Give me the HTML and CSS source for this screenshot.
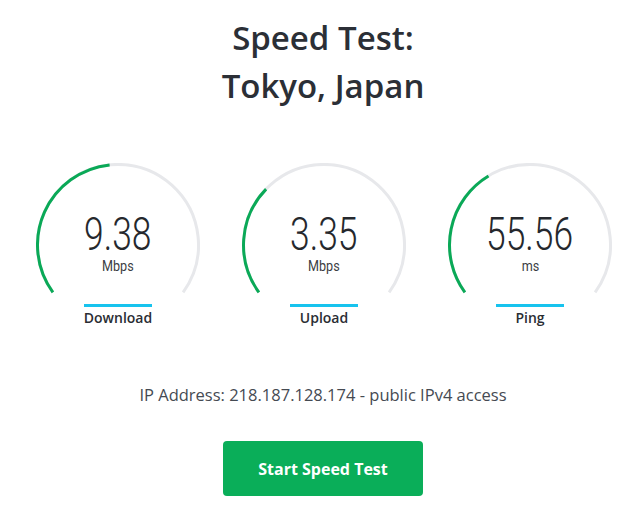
FILE: index.html
```html
<!DOCTYPE html>
<html lang="en">
<head>
<meta charset="utf-8">
<title>Speed Test: Tokyo, Japan</title>
<link rel="stylesheet" href="styles.css">
</head>
<body>
<main class="page">
  <h1 class="title">Speed Test:<br>Tokyo, Japan</h1>

  <section class="gauges">
    <div class="gauge">
      <svg class="dial" viewBox="0 0 164 164" width="164" height="164">
        <path class="track" d="M 16.9 129.3 A 80.5 80.5 0 1 1 147.1 129.3"/>
        <path class="fill" d="M 16.9 129.3 A 80.5 80.5 0 0 1 73.6 1.9"/>
      </svg>
      <div class="readout">
        <span class="value"><span class="squeeze">9.38</span></span>
        <span class="unit"><span class="squeeze">Mbps</span></span>
        <span class="bar"></span>
        <span class="label">Download</span>
      </div>
    </div>

    <div class="gauge">
      <svg class="dial" viewBox="0 0 164 164" width="164" height="164">
        <path class="track" d="M 16.9 129.3 A 80.5 80.5 0 1 1 147.1 129.3"/>
        <path class="fill" d="M 16.9 129.3 A 80.5 80.5 0 0 1 24.1 26.1"/>
      </svg>
      <div class="readout">
        <span class="value"><span class="squeeze">3.35</span></span>
        <span class="unit"><span class="squeeze">Mbps</span></span>
        <span class="bar"></span>
        <span class="label">Upload</span>
      </div>
    </div>

    <div class="gauge">
      <svg class="dial" viewBox="0 0 164 164" width="164" height="164">
        <path class="track" d="M 16.9 129.3 A 80.5 80.5 0 1 1 147.1 129.3"/>
        <path class="fill" d="M 16.9 129.3 A 80.5 80.5 0 0 1 40.5 13.0"/>
      </svg>
      <div class="readout">
        <span class="value"><span class="squeeze">55.56</span></span>
        <span class="unit"><span class="squeeze">ms</span></span>
        <span class="bar"></span>
        <span class="label">Ping</span>
      </div>
    </div>
  </section>

  <p class="ip">IP Address: 218.187.128.174 - public IPv4 access</p>

  <button class="start" type="button">Start Speed Test</button>
</main>
</body>
</html>
```

FILE: styles.css
```css
html, body {
  margin: 0;
  padding: 0;
  background: #ffffff;
}

body {
  font-family: "Open Sans", "Liberation Sans", sans-serif;
  color: #2b2f36;
}

.page {
  width: 640px;
  box-sizing: border-box;
  padding-left: 6px;
  display: flex;
  flex-direction: column;
  align-items: center;
}

.title {
  margin: 14px 0 0;
  font-size: 33px;
  line-height: 48px;
  font-weight: 600;
  text-align: center;
  color: #2b2f36;
}

.gauges {
  margin-top: 53px;
  display: flex;
  justify-content: center;
  gap: 42px;
  padding-left: 2px;
}

.gauge {
  display: grid;
  width: 164px;
  height: 164px;
}

.dial,
.readout {
  grid-area: 1 / 1;
}

.dial {
  display: block;
}

.track,
.fill {
  fill: none;
  stroke-width: 3;
}

.track {
  stroke: #e7e8eb;
}

.fill {
  stroke: #0aa957;
}

.readout {
  display: flex;
  flex-direction: column;
  align-items: center;
  padding-top: 48px;
}

.value {
  font-family: Roboto, "Liberation Sans", sans-serif;
  font-weight: 300;
  font-size: 46px;
  line-height: 46px;
  color: #25282d;
}

.squeeze {
  display: inline-block;
  transform: scaleX(0.77);
}

.unit {
  margin-top: 2px;
  font-family: Roboto, "Liberation Sans", sans-serif;
  font-weight: 400;
  font-size: 15px;
  line-height: 15px;
  color: #3a3d43;
}

.unit .squeeze {
  transform: scaleX(0.84);
}

.bar {
  margin-top: 30px;
  width: 68px;
  height: 3px;
  background: #17c3ee;
}

.label {
  margin-top: 1px;
  font-size: 14px;
  line-height: 20px;
  font-weight: 600;
  color: #2a2d33;
}

.ip {
  margin: 56px 0 0;
  font-size: 16.5px;
  line-height: 24px;
  color: #454a52;
}

.start {
  margin-top: 34px;
  width: 200px;
  height: 55px;
  border: none;
  border-radius: 4px;
  background: #0aae59;
  color: #ffffff;
  font-family: "Open Sans", "Liberation Sans", sans-serif;
  font-weight: 700;
  font-size: 16px;
  cursor: pointer;
}
```
